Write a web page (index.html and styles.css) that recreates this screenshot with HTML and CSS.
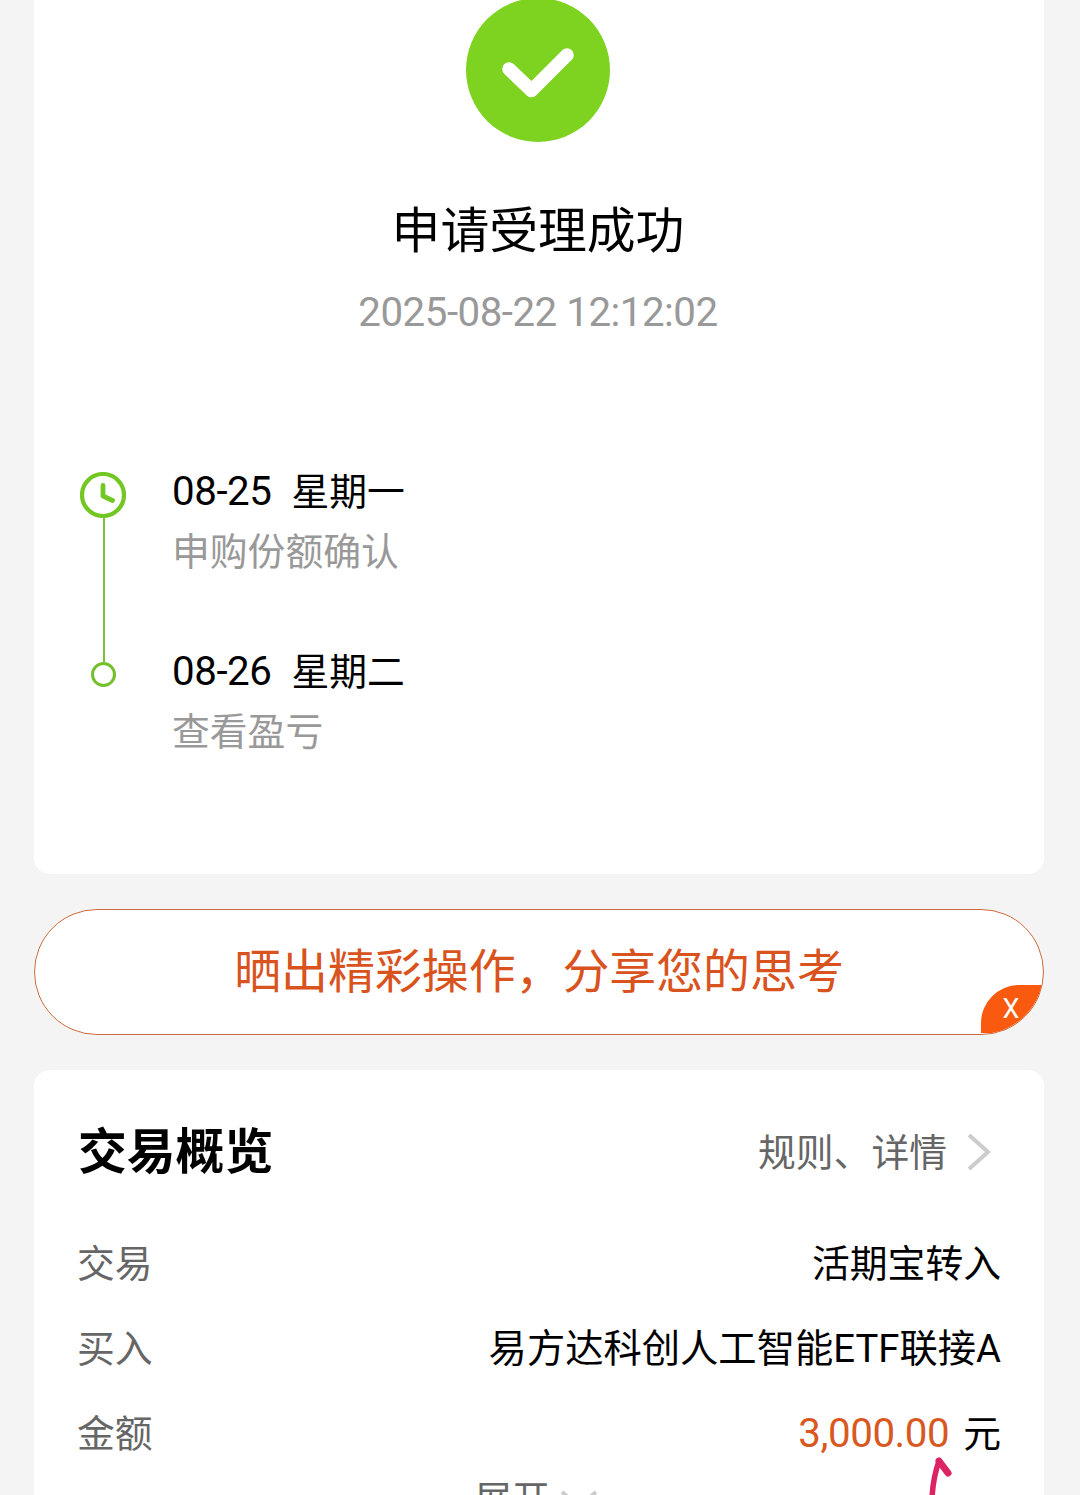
FILE: index.html
```html
<!DOCTYPE html>
<html lang="zh-CN">
<head>
  <meta charset="UTF-8">
  <title>申请受理成功</title>
  <link rel="stylesheet" href="styles.css">
</head>
<body>
  <div class="card result">
    <svg class="result-icon" width="144" height="144" viewBox="0 0 144 144">
      <circle cx="72" cy="72" r="72" fill="#7ed321"/>
      <path d="M43 71 L65.500 92.500 L101 57" fill="none" stroke="#fff" stroke-width="13.500" stroke-linecap="round" stroke-linejoin="round"/>
    </svg>
    <h1>申请受理成功</h1>
    <p class="time">2025-08-22 12:12:02</p>

    <div class="timeline">
      <div class="track">
        <svg width="46" height="46" viewBox="0 0 46 46" fill="none" stroke="#73c722">
          <circle cx="23" cy="23" r="21" stroke-width="4.200"/>
          <path d="M23 13.500 V24 L32.500 28.500" stroke-width="4.800" stroke-linecap="round" stroke-linejoin="round"/>
        </svg>
        <div class="line"></div>
        <div class="dot"></div>
      </div>
      <div class="steps">
        <div class="step">
          <div class="day"><span class="num">08-25</span><span>星期一</span></div>
          <div class="desc">申购份额确认</div>
        </div>
        <div class="step">
          <div class="day"><span class="num">08-26</span><span>星期二</span></div>
          <div class="desc">查看盈亏</div>
        </div>
      </div>
    </div>
  </div>

  <div class="share">
    <span>晒出精彩操作，分享您的思考</span>
    <div class="share-close">X</div>
  </div>

  <div class="card overview">
    <div class="overview-head">
      <h2>交易概览</h2>
      <div class="rules">
        <span>规则、详情</span>
        <svg width="24" height="38" viewBox="0 0 24 38">
          <path d="M2 1 L21 18 L2 35" fill="none" stroke="#ccc" stroke-width="4"/>
        </svg>
      </div>
    </div>
    <div class="row"><span class="label">交易</span><span>活期宝转入</span></div>
    <div class="row"><span class="label">买入</span><span class="fund">易方达科创人工智能ETF联接A</span></div>
    <div class="row">
      <span class="label">金额</span>
      <div class="money"><span class="amount">3,000.00</span><span>元</span></div>
    </div>
    <div class="expand">
      <span>展开</span>
      <svg width="36" height="20" viewBox="0 0 36 20">
        <path d="M1 2 L18 17 L35 2" fill="none" stroke="#ccc" stroke-width="4"/>
      </svg>
    </div>
    <svg class="mark" width="30" height="39" viewBox="0 0 30 39" fill="none" stroke="#dc2364" stroke-linecap="round" stroke-linejoin="round">
      <path d="M7 42 Q8 22 14 5" stroke-width="5.500"/>
      <path d="M14 5 L23 17" stroke-width="7"/>
    </svg>
  </div>
</body>
</html>
```
FILE: styles.css
```css
* {
  box-sizing: border-box;
}
body {
  margin: 0;
  padding: 0 36px 0 34px;
  height: 1495px;
  overflow: hidden;
  background: #f4f4f4;
  color: #000;
  font-family: Roboto, "Noto Sans CJK SC", sans-serif;
  font-size: 37.8px;
  line-height: 60px;
}
h1, h2, p {
  margin: 0;
}
.card {
  background: #fff;
  border-radius: 16px;
}
.result {
  height: 876px;
  margin-top: -2px;
  border-radius: 0 0 16px 16px;
  text-align: center;
}
.result-icon {
  display: block;
  margin: 0 auto;
  position: relative;
  left: -1px;
}
h1 {
  margin-top: 60px;
  padding-right: 2px;
  font-size: 48.8px;
  font-weight: 400;
}
.time {
  margin-top: 21px;
  padding-right: 2px;
  color: #999;
  font-size: 40.3px;
  letter-spacing: -0.5px;
}
.timeline {
  display: flex;
  margin-top: 119px;
  padding-left: 46px;
  text-align: left;
}
.track {
  display: flex;
  flex-direction: column;
  align-items: center;
  width: 46px;
  margin-right: 46px;
  padding-top: 10px;
}
.line {
  width: 2px;
  height: 144px;
  margin-left: 2px;
  background: #7cbf3f;
}
.dot {
  width: 25px;
  height: 25px;
  border: 3px solid #73c02c;
  border-radius: 50%;
}
.step {
  height: 180px;
}
.day {
  display: flex;
  gap: 20px;
}
.num, .amount {
  font-size: 40.3px;
  letter-spacing: -0.45px;
}
.desc {
  color: #999;
}
.share {
  position: relative;
  display: flex;
  align-items: center;
  justify-content: center;
  height: 126px;
  margin: 35px 0;
  padding-bottom: 1px;
  overflow: hidden;
  background: #fff;
  border: 1.5px solid #cf6a3a;
  border-radius: 63px;
  color: #d9531e;
  font-size: 46.9px;
}
.share-close {
  position: absolute;
  right: 0;
  bottom: 1px;
  width: 62px;
  height: 48px;
  padding-right: 2px;
  border-top-left-radius: 38px;
  background: #fa5a0f;
  color: #fff;
  font-size: 27px;
  line-height: 48px;
  text-align: center;
}
.overview {
  position: relative;
  height: 425px;
  padding: 40px 43px 0 44px;
  border-radius: 16px 16px 0 0;
  overflow: hidden;
}
.overview-head {
  display: flex;
  align-items: center;
  justify-content: space-between;
  height: 85px;
  margin-bottom: 26px;
}
h2 {
  font-size: 48.8px;
  font-weight: 700;
}
.rules {
  display: flex;
  align-items: center;
  gap: 20px;
  padding-right: 10px;
  color: #666;
}
.row {
  display: flex;
  align-items: center;
  justify-content: space-between;
  height: 85px;
}
.label {
  margin-left: -1px;
  color: #666;
}
.fund {
  font-size: 38.3px;
}
.money {
  display: flex;
  gap: 14px;
}
.amount {
  color: #d9581f;
}
.expand {
  display: flex;
  align-items: center;
  justify-content: center;
  gap: 11px;
  margin-top: -6px;
  padding-right: 8px;
  color: #666;
}
/* hand-drawn arrow under the amount */
.mark {
  position: absolute;
  left: 891px;
  top: 386px;
}
```
